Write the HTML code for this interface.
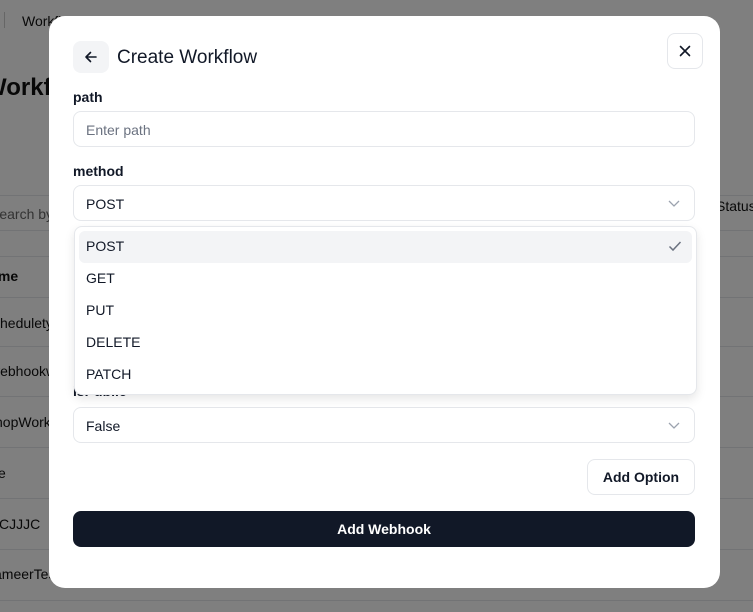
<!DOCTYPE html>
<html><head><style>
*{box-sizing:border-box;margin:0;padding:0}
body{width:753px;height:612px;overflow:hidden;font-family:"Liberation Sans",sans-serif;background:#fff;position:relative;color:#111827}
.bg{position:absolute;inset:0;background:#fff}
.ov{position:absolute;inset:0;background:rgba(0,0,0,0.5)}
.bgt{position:absolute;font-size:14px;color:#111;white-space:nowrap}
.hl{position:absolute;left:0;right:0;height:1px;background:#e5e7eb}
.modal{position:absolute;left:49px;top:16px;width:671px;height:572px;background:#fff;border-radius:16px}
.back{position:absolute;left:24px;top:25px;width:36px;height:32px;background:#f3f4f6;border-radius:8px}
.title{position:absolute;left:68px;top:31px;font-size:19px;font-weight:500;color:#111827}
.close{position:absolute;left:618px;top:17px;width:36px;height:36px;border:1px solid #e5e7eb;border-radius:8px}
.lbl{position:absolute;left:24px;font-size:14px;font-weight:bold;color:#111827}
.inp{position:absolute;left:24px;width:622px;height:36px;border:1px solid #e5e7eb;border-radius:8px;font-size:14px;padding:10px 12px;color:#111827}
.dd{position:absolute;left:25px;top:210px;width:623px;height:169px;border:1px solid #e5e7eb;border-radius:8px;background:#fff;box-shadow:0 4px 10px rgba(0,0,0,0.1)}
.opt{position:absolute;left:4px;width:613px;height:32px;font-size:14px;padding:7px 7px;color:#111827}
.btn{position:absolute;left:538px;top:443px;width:108px;height:36px;border:1px solid #e5e7eb;border-radius:8px;font-size:14px;font-weight:bold;text-align:center;line-height:34px}
.sub{position:absolute;left:24px;top:495px;width:622px;height:36px;background:#111827;border-radius:8px;color:#fff;font-size:14px;font-weight:bold;text-align:center;line-height:36px}
</style></head><body>
<div class="bg">
<div class="bgt" style="left:4px;top:12px;width:1px;height:16px;background:#ccc"></div>
<div class="bgt" style="left:22px;top:13px">Workflows</div>
<div class="bgt" style="left:-16px;top:74px;font-size:24px;font-weight:bold">Workflows</div>
<div class="hl" style="top:195px"></div>
<div class="bgt" style="left:-10px;top:206px;color:#666">Search by</div>
<div class="bgt" style="left:716px;top:198px">Status</div>
<div class="hl" style="top:230px"></div>
<div class="hl" style="top:256px"></div>
<div class="bgt" style="left:-20px;top:268px;font-weight:bold">Name</div>
<div class="hl" style="top:297px"></div>
<div class="bgt" style="left:-14px;top:315px">schedulety</div>
<div class="hl" style="top:346px"></div>
<div class="bgt" style="left:-10px;top:363px">webhookw</div>
<div class="hl" style="top:396px"></div>
<div class="bgt" style="left:-12px;top:414px">shopWorkf</div>
<div class="hl" style="top:447px"></div>
<div class="bgt" style="left:-2px;top:465px">e</div>
<div class="hl" style="top:498px"></div>
<div class="bgt" style="left:-1px;top:516px">CJJJC</div>
<div class="hl" style="top:549px"></div>
<div class="bgt" style="left:-6px;top:566px">ameerTest</div>
<div class="hl" style="top:600px"></div>
</div>
<div class="ov"></div>
<div class="modal">
<div class="back"><svg width="36" height="32" viewBox="0 0 36 32"><path d="M23 16H13M17.5 11.5L13 16l4.5 4.5" stroke="#111827" stroke-width="1.6" fill="none" stroke-linecap="round" stroke-linejoin="round"/></svg></div>
<div class="title">Create Workflow</div>
<div class="close"><svg width="34" height="34" viewBox="0 0 34 34"><path d="M12.5 12.5l9 9M21.5 12.5l-9 9" stroke="#111827" stroke-width="1.6" stroke-linecap="round"/></svg></div>
<div class="lbl" style="top:73px">path</div>
<div class="inp" style="top:95px;color:#6b7280">Enter path</div>
<div class="lbl" style="top:147px">method</div>
<div class="inp" style="top:169px">POST<svg style="position:absolute;right:14px;top:12px" width="12" height="10" viewBox="0 0 12 10"><path d="M1 3l5 5 5-5" stroke="#9ca3af" stroke-width="1.3" fill="none"/></svg></div>
<div class="lbl" style="top:367px">isPublic</div>
<div class="inp" style="top:391px">False<svg style="position:absolute;right:14px;top:12px" width="12" height="10" viewBox="0 0 12 10"><path d="M1 3l5 5 5-5" stroke="#9ca3af" stroke-width="1.3" fill="none"/></svg></div>
<div class="dd">
<div class="opt" style="top:4px;background:#f3f4f6;border-radius:6px">POST<svg style="position:absolute;right:10px;top:9px" width="14" height="12" viewBox="0 0 14 12"><path d="M1.5 6.5l3.5 3.5 7.5-8" stroke="#6b7280" stroke-width="1.5" fill="none"/></svg></div>
<div class="opt" style="top:36px">GET</div>
<div class="opt" style="top:68px">PUT</div>
<div class="opt" style="top:100px">DELETE</div>
<div class="opt" style="top:132px">PATCH</div>
</div>
<div class="btn">Add Option</div>
<div class="sub">Add Webhook</div>
</div>
</body></html>
